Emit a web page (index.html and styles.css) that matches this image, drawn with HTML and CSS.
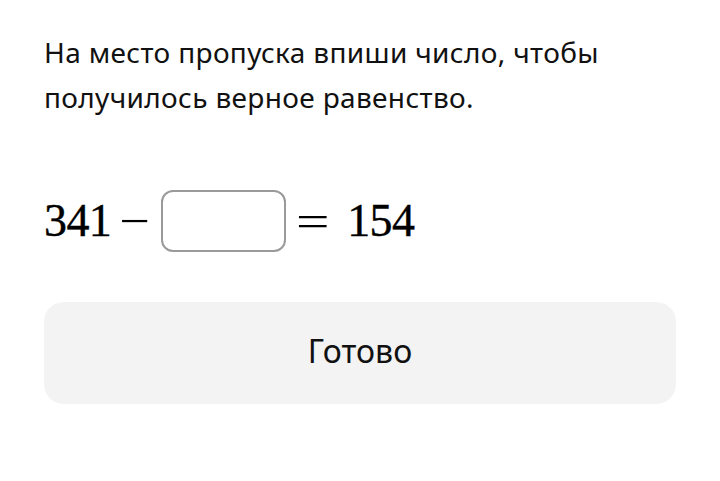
FILE: index.html
```html
<!DOCTYPE html>
<html lang="ru">
<head>
<meta charset="utf-8">
<link rel="stylesheet" href="styles.css">
</head>
<body>
<main class="task">
  <p class="question">На место пропуска впиши число, чтобы получилось верное равенство.</p>
  <div class="equation">
    <span class="num">341</span>
    <span class="op minus">−</span>
    <span class="blank"></span>
    <span class="op eq">=</span>
    <span class="num">154</span>
  </div>
  <button class="done">Готово</button>
</main>
</body>
</html>
```
FILE: styles.css
```css
html, body {
  margin: 0;
  padding: 0;
  background: #ffffff;
}
.task {
  padding: 30px 44px 0 44px;
  display: flex;
  flex-direction: column;
}
.question {
  margin: 0;
  font-family: "Noto Sans", sans-serif;
  font-size: 28px;
  line-height: 45px;
  letter-spacing: 0.35px;
  color: #111;
  max-width: 600px;
}
.equation {
  display: flex;
  align-items: center;
  margin-top: 70px;
  height: 62px;
  color: #000;
}
.num {
  font-family: "Liberation Serif", serif;
  font-size: 46px;
  letter-spacing: -0.6px;
  line-height: 1;
  -webkit-text-stroke: 0.4px #000;
}
.op {
  display: inline-block;
  font-family: "Liberation Serif", serif;
  font-size: 45px;
  line-height: 1;
  text-align: center;
}
.minus {
  width: 25px;
  margin: 0 14px 0 11px;
  transform: scaleX(1.2);
}
.eq {
  width: 25px;
  margin: 0 22px 0 14px;
  transform: scaleX(1.32);
}
.blank {
  width: 121px;
  height: 58px;
  border: 2px solid #9a9a9a;
  border-radius: 12px;
}
.done {
  margin-top: 50px;
  height: 102px;
  border: none;
  border-radius: 20px;
  background: #f3f3f3;
  font-family: "Noto Sans", sans-serif;
  font-size: 32px;
  color: #111;
  padding: 0 0 6px 0;
}
```
